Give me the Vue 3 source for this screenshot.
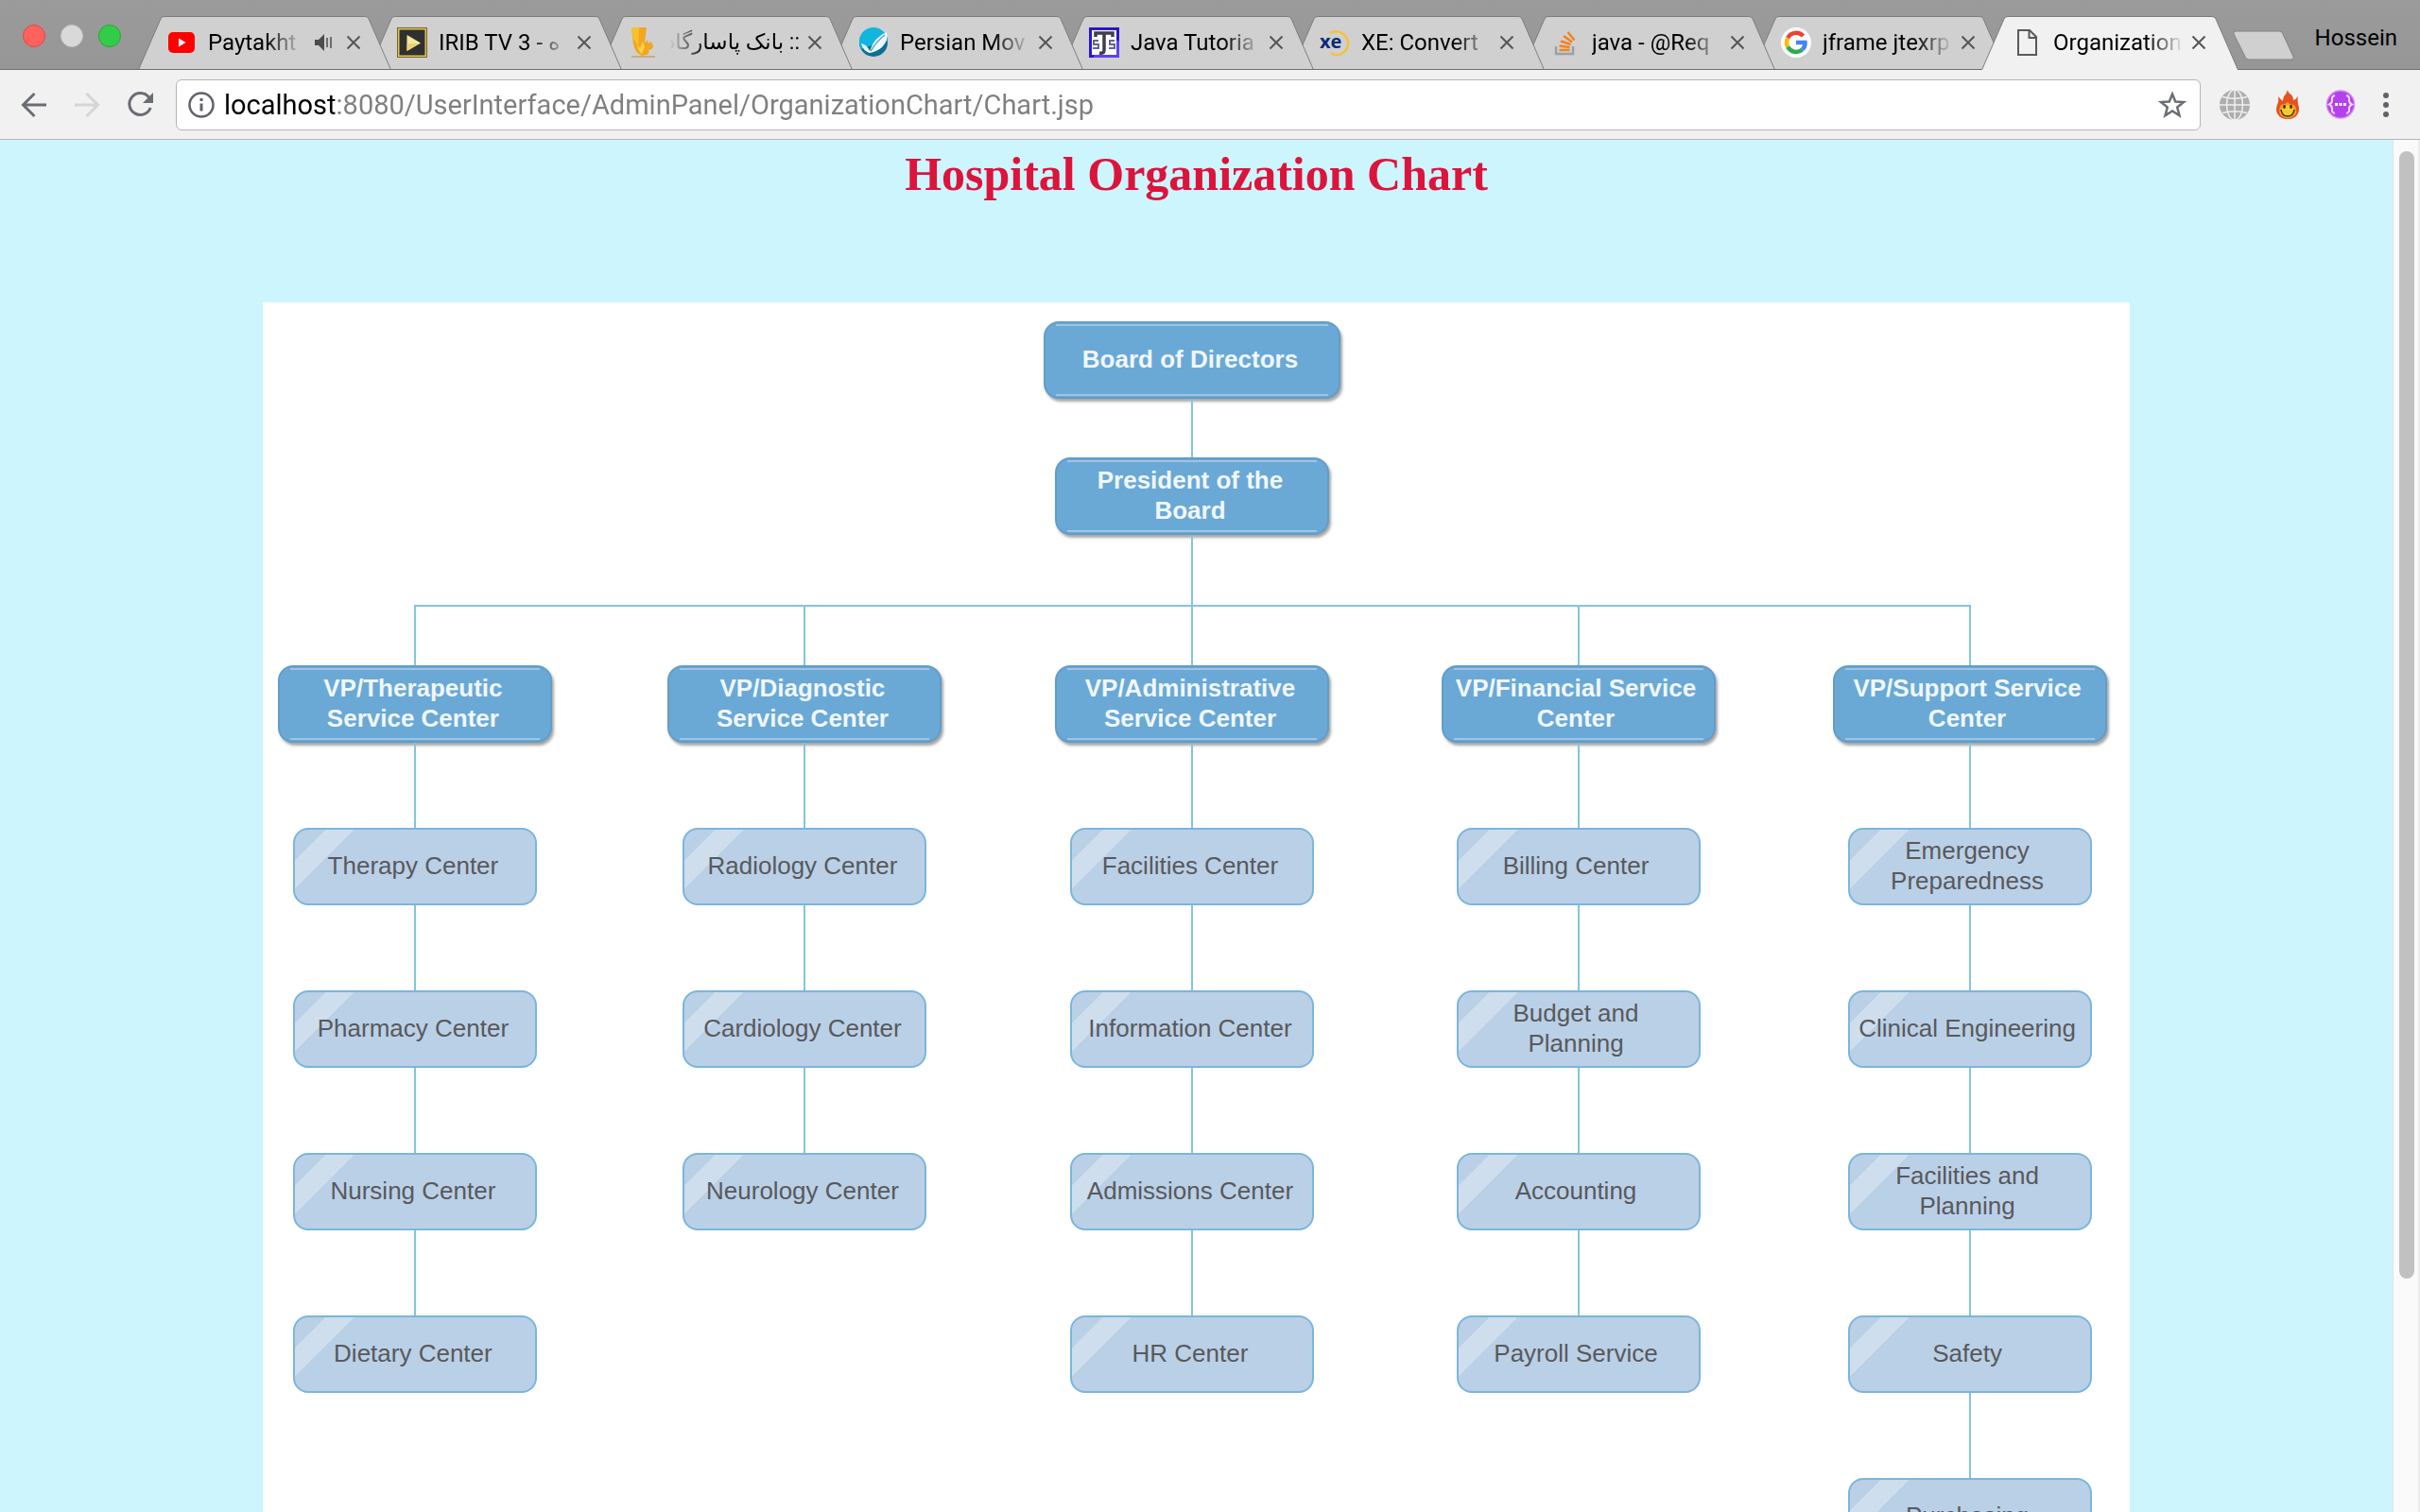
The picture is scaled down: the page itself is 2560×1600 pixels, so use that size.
<script setup>
import { ref } from 'vue'

const tabs = [
  { icon: 'youtube', title: 'Paytakht', audio: true },
  { icon: 'irib', title: 'IRIB TV 3 - ه' },
  { icon: 'bank', title: ':: بانک پاسارگاد', rtl: true },
  { icon: 'movie', title: 'Persian Mov' },
  { icon: 'java', title: 'Java Tutoria' },
  { icon: 'xe', title: 'XE: Convert' },
  { icon: 'stack', title: 'java - @Req' },
  { icon: 'google', title: 'jframe jtexrp' },
  { icon: 'page', title: 'Organization', active: true },
]

const url = ref('localhost:8080/UserInterface/AdminPanel/OrganizationChart/Chart.jsp')

const branches = [
  {
    head: 'VP/Therapeutic\nService Center',
    items: ['Therapy Center', 'Pharmacy Center', 'Nursing Center', 'Dietary Center'],
  },
  {
    head: 'VP/Diagnostic\nService Center',
    items: ['Radiology Center', 'Cardiology Center', 'Neurology Center'],
  },
  {
    head: 'VP/Administrative\nService Center',
    items: ['Facilities Center', 'Information Center', 'Admissions Center', 'HR Center'],
  },
  {
    head: 'VP/Financial Service\nCenter',
    items: ['Billing Center', 'Budget and\nPlanning', 'Accounting', 'Payroll Service'],
  },
  {
    head: 'VP/Support Service\nCenter',
    items: ['Emergency\nPreparedness', 'Clinical Engineering', 'Facilities and\nPlanning', 'Safety', 'Purchasing'],
  },
]
</script>

<template>
  <div class="browser">
    <header class="strip">
      <div class="lights">
        <button class="light red" aria-label="Close window"></button>
        <button class="light gray" aria-label="Minimize window"></button>
        <button class="light green" aria-label="Zoom window"></button>
      </div>

      <nav class="tabs">
        <div
          v-for="(tab, i) in tabs"
          :key="tab.icon"
          class="tab"
          :class="{ active: tab.active }"
          :style="{ zIndex: tab.active ? 20 : 10 - i }"
        >
          <svg class="shape" viewBox="0 0 272 57" aria-hidden="true">
            <path d="M0.5 57 L24 3 Q25 0.5 28 0.5 H244 Q247 0.5 248 3 L271.5 57" />
          </svg>

          <svg class="favicon" viewBox="0 0 32 32" aria-hidden="true">
            <g v-if="tab.icon === 'youtube'">
              <rect x="2" y="5" width="28" height="22" rx="5" fill="#f00" />
              <path d="M13 11.5 L20.500 16 L13 20.500 Z" fill="#fff" />
            </g>
            <g v-else-if="tab.icon === 'irib'">
              <rect width="32" height="32" fill="#7a6320" />
              <rect x="1" y="1" width="30" height="30" fill="#e0c45a" />
              <rect x="2.500" y="2.500" width="27" height="27" fill="#303030" />
              <path d="M10.500 8 L25 16.500 L10.500 25 Z" fill="#f6e79c" />
              <path d="M10.500 17 L24 17 L10.500 25 Z" fill="#e9d275" />
            </g>
            <g v-else-if="tab.icon === 'bank'">
              <path d="M4 0 H20 L19 8 Q18 13 18 17 L21 13 L22 17 L25 15 L27 20 Q27 23 22 24 Q24 27 20 29 L15 30 Q8 27 6 18 Z" fill="#f2a71e" />
              <path d="M4 0 H12 L11 20 Q8 14 6 12 Z" fill="#f9c22b" />
              <path d="M10 18 L13 22 L16 15 L18 21 L15 28 Q11 25 10 18" fill="#fbd04b" />
              <path d="M4 31 H29" stroke="#c9ac84" stroke-width="2" />
            </g>
            <g v-else-if="tab.icon === 'movie'">
              <circle cx="16" cy="16" r="15" fill="#0a6f94" />
              <path d="M1 16 A15 15 0 0 1 31 14 Q16 18 3 23 Q1 20 1 16" fill="#12b5dc" />
              <path d="M3 17 Q9 18 12 25 Q17 10 30 5 Q32 14 25 21 Q19 26 12 27 Q5 25 3 17" fill="#eef7fa" />
              <path d="M13 25 Q20 14 28 8" stroke="#58a9c2" stroke-width="1.500" fill="none" />
            </g>
            <g v-else-if="tab.icon === 'java'">
              <rect x="1.500" y="1.500" width="29" height="29" fill="#fff" stroke="#2a18c8" stroke-width="3" />
              <path d="M5 30.500 H30.500 V14" fill="none" stroke="#5b42f5" stroke-width="3" />
              <path d="M7 10 V6 H25 V10 M16 6 V24 Q16 28 11 27" fill="none" stroke="#3d3d4c" stroke-width="3.500" />
              <path d="M10 14 H5 V18 H10 V22 H4 M27 14 H22 V18 H27 V22 H21" fill="none" stroke="#65619b" stroke-width="2" />
            </g>
            <g v-else-if="tab.icon === 'xe'">
              <path d="M11 6 Q18 2 25 7 Q31 12 30 18 Q29 25 23 28 Q17 31 12 27" fill="none" stroke="#f4c23c" stroke-width="2.500" />
              <text x="0" y="22" class="xe-text">xe</text>
            </g>
            <g v-else-if="tab.icon === 'stack'">
              <path d="M6 20 V28 H24 V20" fill="none" stroke="#9aa0a7" stroke-width="2.500" />
              <path d="M9.500 24 H20.500 M9.500 19.500 L20.500 21 M11 14.500 L21.500 18 M14 9 L23 15.500 M18.500 5 L25.500 13.500" fill="none" stroke="#f58220" stroke-width="2.500" />
            </g>
            <g v-else-if="tab.icon === 'google'">
              <circle cx="16" cy="16" r="16" fill="#fff" />
              <g fill="none" stroke-width="4.500">
                <path d="M23.500 9 A10 10 0 0 0 7.200 11.300" stroke="#ea4335" />
                <path d="M7.200 11.300 A10 10 0 0 0 7.200 20.700" stroke="#fbbc05" />
                <path d="M7.200 20.700 A10 10 0 0 0 22.500 23.500" stroke="#34a853" />
                <path d="M22.500 23.500 Q26 20 25.500 16 H16" stroke="#4285f4" />
              </g>
            </g>
            <g v-else fill="none" stroke="#5a5a5c" stroke-width="2">
              <path d="M7 3 H19 L26 10 V29 H7 Z" />
              <path d="M18.500 3 V11 H26" />
            </g>
          </svg>

          <span class="tab-title" :dir="tab.rtl ? 'rtl' : 'ltr'" :class="{ rtl: tab.rtl }">{{ tab.title }}</span>

          <svg v-if="tab.audio" class="audio" viewBox="0 0 20 20" aria-hidden="true">
            <path d="M1 7 H5 L11 1 V19 L5 13 H1 Z" fill="#4c4c4e" />
            <path d="M14 5 V15 M18 4 V16" stroke="#4c4c4e" stroke-width="1.500" />
          </svg>

          <button class="tab-close" aria-label="Close tab">
            <svg viewBox="0 0 16 16"><path d="M1.500 1.500 L14.500 14.500 M14.500 1.500 L1.500 14.500" /></svg>
          </button>
        </div>
      </nav>

      <button class="new-tab" aria-label="New tab">
        <svg viewBox="0 0 66 32">
          <path d="M1 4 Q0 1 3 1 H49 Q52 1 53 4 L64 28 Q65 31 62 31 H17 Q14 31 13 28 Z" />
        </svg>
      </button>
      <button class="profile">Hossein</button>
    </header>

    <div class="toolbar">
      <button class="tool" aria-label="Back">
        <svg viewBox="0 0 28 28" fill="none" stroke="#6a6d73" stroke-width="3">
          <path d="M27 14 H3 M14.500 2 L2.500 14 L14.500 26" />
        </svg>
      </button>
      <button class="tool" aria-label="Forward" disabled>
        <svg viewBox="0 0 28 28" fill="none" stroke="#d4d5d7" stroke-width="3">
          <path d="M1 14 H25 M13.500 2 L25.500 14 L13.500 26" />
        </svg>
      </button>
      <button class="tool reload" aria-label="Reload">
        <svg viewBox="0 0 28 28">
          <path d="M23.500 6 A11.500 11.500 0 1 0 25.200 17" fill="none" stroke="#6a6d73" stroke-width="3" />
          <path d="M28 1 V12 H17 Z" fill="#6a6d73" />
        </svg>
      </button>

      <div class="omnibox">
        <svg class="info" viewBox="0 0 28 28" aria-hidden="true">
          <circle cx="14" cy="14" r="12.500" fill="none" stroke="#5f6368" stroke-width="2.500" />
          <path d="M14 12.500 V20.500 M14 7 V10" stroke="#5f6368" stroke-width="3" />
        </svg>
        <input v-model="url" class="url" type="text" aria-label="Address" spellcheck="false" />
        <button class="star" aria-label="Bookmark this page">
          <svg viewBox="0 0 30 30">
            <path d="M15 3.500 L18.200 11.500 L27 12 L20.200 17.500 L22.500 26.200 L15 21.400 L7.500 26.200 L9.800 17.500 L3 12 L11.800 11.500 Z" fill="none" stroke="#6a6d73" stroke-width="2.500" />
          </svg>
        </button>
      </div>

      <button class="extension" aria-label="Globe extension">
        <svg viewBox="0 0 32 32">
          <circle cx="16" cy="16" r="16" fill="#aeaeae" />
          <g fill="none" stroke="#efefef" stroke-width="1.500">
            <path d="M16 0 V32 M0 16 H32 M3 7.500 Q16 11 29 7.500 M3 24.500 Q16 21 29 24.500" />
            <ellipse cx="16" cy="16" rx="8.500" ry="16" />
          </g>
        </svg>
      </button>
      <button class="extension" aria-label="Flame extension">
        <svg viewBox="0 0 32 32">
          <path d="M16 0 Q15 4 12 7 Q11 10 11 12 Q8 10 6 7 Q7 12 5 16 Q3 21 5 25 Q8 31 16 31 Q24 31 27 25 Q29 20 27 15 Q26 11 27 7 Q25 10 22 11 Q22 6 18 4 Q16 2 16 0" fill="#e8501f" />
          <path d="M16 13 Q13 16 9 16 Q6 21 8 26 Q11 30 16 30 Q22 30 25 25 Q26 20 23 16 Q18 16 16 13" fill="#f9a01b" />
          <circle cx="16" cy="23" r="6.500" fill="#fcc92a" />
          <path d="M9 21 Q10 28 16 28 Q22 28 23 21" fill="none" stroke="#3b2a1a" stroke-width="1.500" />
          <ellipse cx="12.500" cy="18" rx="1.300" ry="2" fill="#222" />
          <ellipse cx="19.500" cy="18" rx="1.300" ry="2" fill="#222" />
        </svg>
      </button>
      <button class="extension" aria-label="Code extension">
        <svg viewBox="0 0 32 32">
          <circle cx="16" cy="15.500" r="14.500" fill="#b541ec" stroke="#d08af5" stroke-width="1.500" />
          <g fill="none" stroke="#f0d9fc" stroke-width="2">
            <path d="M10 6 Q6 7 7 11 Q7 14 4 15.500 Q7 17 7 20 Q6 24 10 25 M22 6 Q26 7 25 11 Q25 14 28 15.500 Q25 17 25 20 Q26 24 22 25" />
          </g>
          <path d="M10 15.500 H13 M14.500 15.500 H17.500 M19 15.500 H22" stroke="#fff" stroke-width="3" />
        </svg>
      </button>
      <button class="menu" aria-label="Menu">
        <svg viewBox="0 0 8 28" fill="#5f6368">
          <circle cx="4" cy="4" r="3" /><circle cx="4" cy="14" r="3" /><circle cx="4" cy="24" r="3" />
        </svg>
      </button>
    </div>

    <div class="viewport">
      <main class="page">
        <h1>Hospital Organization Chart</h1>

        <section class="chart">
          <div class="trunk">
            <div class="node major board">Board of Directors</div>
            <div class="link short"></div>
            <div class="node major">President of the<br />Board</div>
            <div class="link mid"></div>
          </div>
          <div class="rail"></div>
          <div class="branches">
            <div v-for="branch in branches" :key="branch.head" class="branch">
              <div class="link drop"></div>
              <div class="node major">{{ branch.head }}</div>
              <template v-for="item in branch.items" :key="item">
                <div class="link"></div>
                <div class="node minor">{{ item }}</div>
              </template>
            </div>
          </div>
        </section>
      </main>
      <div class="scrollbar"><div class="thumb"></div></div>
    </div>
  </div>
</template>

<style>
body {
  margin: 0;
}
</style>

<style scoped>
* {
  box-sizing: border-box;
}

button {
  padding: 0;
  border: 0;
  background: none;
  font: inherit;
  color: inherit;
}

svg {
  display: block;
}

.browser {
  display: flex;
  flex-direction: column;
  height: 100vh;
  overflow: hidden;
  font-family: Roboto, 'DejaVu Sans', sans-serif;
  font-size: 24px;
  color: #000;
}

/* Tab strip */
.strip {
  display: flex;
  flex: none;
  height: 74px;
  padding-left: 24px;
  background: linear-gradient(#9b9b9b, #969696);
  border-bottom: 1px solid #6f6f6f;
}

.lights {
  display: flex;
  gap: 16px;
  width: 120px;
  padding-top: 26px;
}

.light {
  width: 24px;
  height: 24px;
  border: 1px solid #c4c4c4;
  border-radius: 50%;
  background: #d9d9d9;
}

.light.red {
  background: #ff625c;
  border-color: #df4744;
}

.light.green {
  background: #33cc4a;
  border-color: #1eab33;
}

.tabs {
  display: flex;
  padding-top: 17px;
  padding-right: 28px;
  isolation: isolate;
}

.tab {
  position: relative;
  display: flex;
  align-items: center;
  width: 272px;
  height: 56px;
  margin-right: -28px;
  padding: 0 34px 0 32px;
}

.shape {
  position: absolute;
  top: 0;
  left: 0;
  z-index: -1;
  width: 272px;
  height: 56px;
  fill: #d0d0d0;
  stroke: #7c7c7c;
}

.tab.active .shape {
  height: 57px;
  fill: #f1f1f1;
}

.favicon {
  flex: none;
  width: 32px;
  height: 32px;
  margin-right: 12px;
}

.xe-text {
  font: bold 20px 'Open Sans', sans-serif;
  fill: #0b2a78;
}

.tab-title {
  flex: 1;
  min-width: 0;
  overflow: hidden;
  white-space: nowrap;
  line-height: 32px;
  -webkit-mask-image: linear-gradient(to left, transparent, #000 40px);
  mask-image: linear-gradient(to left, transparent, #000 40px);
}

.tab-title.rtl {
  font-size: 23px;
  -webkit-mask-image: linear-gradient(to right, transparent, #000 40px);
  mask-image: linear-gradient(to right, transparent, #000 40px);
}

.audio {
  flex: none;
  width: 20px;
  height: 20px;
  margin-left: 12px;
}

.tab-close {
  flex: none;
  margin-left: 8px;
}

.audio + .tab-close {
  margin-left: 14px;
}

.tab-close svg {
  width: 16px;
  height: 16px;
  stroke: #555;
  stroke-width: 2;
}

.new-tab {
  align-self: flex-start;
  margin: 32px 0 0 -6px;
}

.new-tab svg {
  width: 66px;
  height: 32px;
  fill: #d0d0d0;
  stroke: #828282;
}

.profile {
  align-self: flex-start;
  margin: 24px 24px 0 auto;
  line-height: 32px;
}

/* Toolbar */
.toolbar {
  display: flex;
  flex: none;
  align-items: center;
  height: 74px;
  padding: 0 32px 0 22px;
  background: #f1f1f1;
  border-bottom: 1px solid #b4b4b4;
}

.tool {
  margin-right: 28px;
}

.tool svg,
.info {
  width: 28px;
  height: 28px;
}

.tool.reload {
  margin-right: 24px;
}

.omnibox {
  display: flex;
  flex: 1;
  align-items: center;
  height: 54px;
  padding: 0 14px 0 12px;
  background: #fff;
  border: 1px solid #b5b5b5;
  border-radius: 6px;
}

.url {
  flex: 1;
  min-width: 0;
  height: 48px;
  margin-left: 10px;
  padding: 0;
  border: 0;
  outline: 0;
  font: 29px Roboto, sans-serif;
  /* host name in black, path in grey */
  background: linear-gradient(to right, #000 120px, #7f7f7f 120px);
  -webkit-background-clip: text;
  background-clip: text;
  -webkit-text-fill-color: transparent;
}

.star svg {
  width: 30px;
  height: 30px;
}

.extension {
  margin-left: 24px;
}

.omnibox + .extension {
  margin-left: 20px;
}

.extension svg {
  width: 32px;
  height: 32px;
}

.menu {
  margin-left: 28px;
}

.menu svg {
  width: 8px;
  height: 28px;
}

/* Page */
.viewport {
  display: flex;
  flex: 1;
  min-height: 0;
}

.page {
  flex: 1;
  overflow: hidden;
  background: #ccf5fe;
}

h1 {
  margin: 8px 0 108px;
  font: bold 50px/56px 'Liberation Serif', serif;
  text-align: center;
  color: #dc143c;
}

.chart {
  width: 78%;
  margin: 0 auto;
  padding: 20px 24px 60px 16px;
  background: #fff;
  font: 26px/32px 'Liberation Sans', sans-serif;
}

.trunk {
  display: flex;
  flex-direction: column;
  align-items: center;
}

.node {
  display: flex;
  align-items: center;
  justify-content: center;
  height: 82px;
  padding: 0 5px 2px 0;
  border: 2px solid;
  border-radius: 16px;
  white-space: pre;
  text-align: center;
}

.major {
  width: 290px;
  border-color: #629dc7;
  background:
    linear-gradient(#9cc5e5, #9cc5e5) 50% 1px / 264px 2px no-repeat,
    linear-gradient(#9cc5e5, #9cc5e5) 50% 75px / 264px 2px no-repeat,
    #6aa9d6;
  box-shadow: 2px 3px 3px rgba(0, 0, 0, 0.35);
  font-weight: bold;
  color: #f1f7fc;
}

.major.board {
  width: 314px;
  background-size: 288px 2px, 288px 2px, auto;
}

.minor {
  width: 258px;
  border-color: #7bb5dd;
  background: linear-gradient(135deg, transparent 23px, #cedeed 23px, #cedeed 44px, transparent 44px) #bad0e7;
  color: #58595b;
}

.link {
  width: 2px;
  height: 90px;
  background: #82c6da;
}

.link.short {
  height: 62px;
}

.link.mid {
  height: 74px;
}

.link.drop {
  height: 62px;
}

.rail {
  height: 2px;
  margin: 0 144px;
  background: #82c6da;
}

.branches {
  display: grid;
  grid-template-columns: 412fr 410fr 408fr 414fr 290fr;
}

.branch {
  display: flex;
  flex-direction: column;
  align-items: center;
  width: 290px;
}

.scrollbar {
  flex: none;
  width: 29px;
  padding: 12px 6px 20px;
  background: #fafafa;
  border-left: 1px solid #e3e3e3;
  border-right: 2px solid #ececec;
}

.thumb {
  width: 16px;
  height: 84%;
  border-radius: 8px;
  background: #c1c1c1;
}
</style>
